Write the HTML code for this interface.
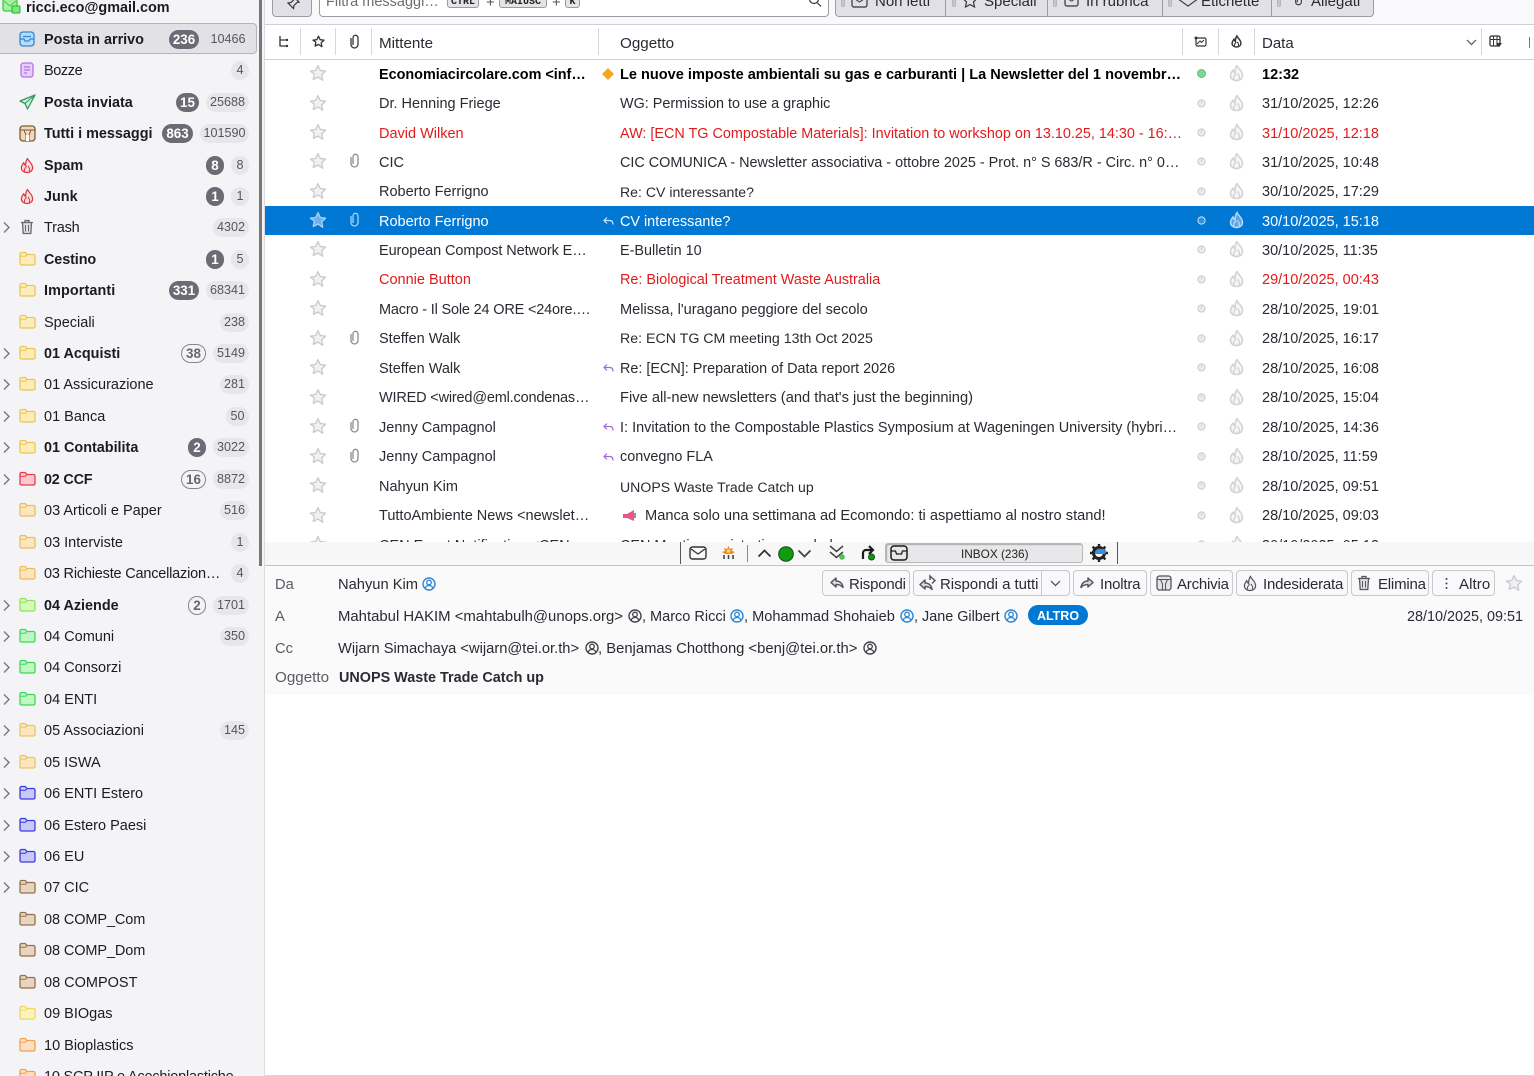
<!DOCTYPE html>
<html lang="it"><head><meta charset="utf-8"><title>Posta in arrivo</title>
<style>
html,body{margin:0;padding:0;width:1534px;height:1076px;overflow:hidden;background:#fff}
body{font:15px "Liberation Sans",sans-serif;color:#1c1b22;position:relative}
div,span,svg{box-sizing:border-box}
.a{position:absolute;white-space:nowrap}
svg{position:absolute;overflow:visible;fill:none}
#side{position:absolute;left:0;top:0;width:265px;height:1076px;background:#f4f4f6;border-right:1px solid #dcdce0;overflow:hidden}
#sb{position:absolute;left:259px;top:0;width:3px;height:566px;background:#777}
.f{position:absolute;left:0;width:258px;height:31px}
.f .n{position:absolute;left:44px;top:8px;line-height:17px;font-size:14.5px;white-space:nowrap}
.f.b .n{font-weight:bold;font-size:14.4px}
.f svg.fo{left:19px;top:7px;width:17px;height:15px}
.f svg.ch{left:3px;top:9px;width:7px;height:13px}
.c{position:absolute;top:6px;height:19px;border-radius:10px;background:#e7e7eb;color:#55555e;font-size:12.6px;line-height:19px;text-align:center;right:9px}
.u{position:absolute;top:6px;height:19px;border-radius:10px;background:#6b6b76;color:#fff;font-weight:bold;font-size:13.4px;line-height:19px;text-align:center}
.o{position:absolute;top:6px;height:19px;border-radius:10px;border:1px solid #85858e;color:#66666e;font-weight:bold;font-size:13.4px;line-height:17px;text-align:center;background:#f4f4f6}
.r{position:absolute;left:265px;width:1269px;height:29.4px;color:#2b2a33}
.r .m,.r .s,.r .d{position:absolute;top:7.500px;line-height:17px;white-space:nowrap;font-size:14.5px}
.r .s{font-size:14.4px}
.r .m{left:114px}.r .s{left:355px}.r .d{left:997px}
.r.b{font-weight:bold;color:#000}
.r.red{color:#e01b1b}
.r.sel{background:#0078d4;color:#fff}
.st{left:44px;top:5px;width:18px;height:18px}
.cl{left:84px;top:6px;width:11px;height:15px}
.dt{left:932px;top:10px;width:9px;height:9px}
.fl{left:964px;top:5px;width:15px;height:18px}
.rp{left:338px;top:10px;width:11px;height:10px}
.h{position:absolute;top:28px;width:1px;height:27px;background:#d8d8dc}
.l{position:absolute;font-size:14.7px;line-height:18px;white-space:nowrap;color:#2b2a33}
.btn{position:absolute;top:570px;height:26px;border:1px solid #c8c8cd;border-radius:4px;background:#f9f9fb;font-size:15px;line-height:26px;color:#2b2a33;white-space:nowrap;letter-spacing:-.2px}
.btn span{position:absolute;top:0}
.tab{position:absolute;top:-8px;height:25px;background:#e0e0e6;border-right:1px solid #9d9da3;border-bottom:1px solid #9d9da3;font-size:15px;line-height:16px;white-space:nowrap;color:#2b2a33}
.key{position:absolute;top:-8px;height:16px;background:#e4e4e8;border:1px solid #9a9aa0;border-radius:3px;font:bold 10px/20px "Liberation Mono",monospace;text-align:center;color:#222;overflow:hidden}
.g{position:absolute;top:-4px;width:4px;height:11px;border-radius:2px;background:#c6c6cc;border:1px solid #b4b4ba}
</style></head><body>
<svg width="0" height="0" style="position:absolute"><defs>
<symbol id="star" viewBox="0 0 18 18"><path d="M9 1.600l2.300 4.900 5.300.7-3.900 3.700 1 5.400L9 13l-4.700 2.400 1-5.400L1.400 7.200l5.300-.7z" fill="#f1f1f3" stroke="#c9c9cf" stroke-width="1.300" stroke-linejoin="round"/></symbol>
<symbol id="stars" viewBox="0 0 18 18"><path d="M9 1.600l2.300 4.900 5.300.7-3.900 3.700 1 5.400L9 13l-4.700 2.400 1-5.400L1.400 7.200l5.300-.7z" fill="#6fb1e8" stroke="#a9d3f3" stroke-width="1.300" stroke-linejoin="round"/></symbol>
<symbol id="clip" viewBox="0 0 11 15"><path d="M2 4.500v6a3.500 3.500 0 0 0 7 0V3.800a2.500 2.500 0 0 0-5 0v6.700" stroke="currentColor" stroke-width="1.300" stroke-linecap="round"/></symbol>
<symbol id="fl" viewBox="0 0 15 17"><path d="M8 1c1 3 5.500 5 5.500 10 0 3-2.500 5-6 5s-6-2-6-5c0-2.500 1.500-4 2.500-5.500C4.500 7 5 8 6 8.500 6 6 6.500 3 8 1z" stroke="#d2d2d6" stroke-width="1.500" fill="#f6f6f8" stroke-linejoin="round"/><path d="M5 15c-1-2.500.5-3.500 2-6M10 15c1-2.500 0-4-1.500-6" stroke="#d2d2d6" stroke-width="1.300"/></symbol>
<symbol id="flr" viewBox="0 0 15 17"><path d="M8 1c1 3 5.500 5 5.500 10 0 3-2.500 5-6 5s-6-2-6-5c0-2.500 1.500-4 2.500-5.500C4.500 7 5 8 6 8.500 6 6 6.500 3 8 1z" stroke="#d83a42" stroke-width="1.300" fill="#fbdcdc" stroke-linejoin="round"/><path d="M5 15c-1-2.500.5-3.500 2-6M10 15c1-2.500 0-4-1.500-6" stroke="#d83a42" stroke-width="1.100"/></symbol>
<symbol id="dot" viewBox="0 0 9 9"><circle cx="4.500" cy="4.500" r="3.600" fill="#ececef" stroke="#c8c8cc"/><path d="M4.500 2.500v2" stroke="#c8c8cc"/></symbol>
<symbol id="rep" viewBox="0 0 11 10"><path d="M4 1.500L1 4.500l3 3M1.500 4.500H7c2 0 3 1.300 3 4" stroke="#a06ad8" stroke-width="1.200"/></symbol>
<symbol id="ch" viewBox="0 0 7 13"><path d="M1 1.500l5 5-5 5" stroke="#77777f" stroke-width="1.400"/></symbol>
<symbol id="fd" viewBox="0 0 17 15"><path d="M1 3a1.500 1.500 0 0 1 1.500-1.500h3.700L8 3.500h6.500A1.500 1.500 0 0 1 16 5v7.500a1.500 1.500 0 0 1-1.500 1.500h-12A1.500 1.500 0 0 1 1 12.500z" stroke="currentColor" stroke-width="1.300" fill="var(--x)"/><path d="M1 5.200h5.500L8 3.500" stroke="currentColor" stroke-width="1"/></symbol>
<symbol id="pr" viewBox="0 0 14 14"><circle cx="7" cy="7" r="6" stroke="currentColor" stroke-width="1.400"/><circle cx="7" cy="5.500" r="2.300" stroke="currentColor" stroke-width="1.300"/><path d="M3 11.500c.7-2.200 2-3 4-3s3.300.8 4 3" stroke="currentColor" stroke-width="1.300"/></symbol>
</defs></svg>

<div id="side">
<div class="a" style="left:26px;top:0;font-weight:bold;font-size:14.4px;line-height:17px">ricci.eco@gmail.com</div>
<svg style="left:2px;top:-2px;width:20px;height:17px" viewBox="0 0 20 17"><rect x="1" y="1" width="14" height="12" rx="2" fill="#a6f0a6" stroke="#3ccf3c" stroke-width="1.300"/><path d="M2 3l6 5 6-5" stroke="#3ccf3c"/><rect x="10" y="8" width="8" height="7" rx="1" fill="#7fe67f" stroke="#24b324"/></svg>

<div class="f b" style="top:23px;height:31px;width:257px;background:#e1e1e6;border:1px solid #b4b4bb;border-left:0;border-radius:0 4px 4px 0"><svg style="left:19px;top:7px;width:16px;height:16px" viewBox="0 0 16 16"><rect x="1" y="1" width="14" height="14" rx="3" fill="#b8dcf8" stroke="#2f86d4" stroke-width="1.300"/><path d="M1 8h4l1 2h4l1-2h4M4 5.500h8" stroke="#2f86d4" stroke-width="1.200"/></svg><span class="n" style="top:8px">Posta in arrivo</span><span class="u" style="left:169px;width:30px;top:6px">236</span><span class="c" style="left:200px;right:auto;width:56px;top:6px;background:none">10466</span></div>

<div class="f" style="top:55px"><svg style="left:20px;top:7px;width:14px;height:16px" viewBox="0 0 14 16"><rect x="1" y="1" width="12" height="14" rx="2.500" fill="#e6cdfb" stroke="#b273ea" stroke-width="1.300"/><path d="M4 5h6M4 8h6M4 11h3" stroke="#a45fe0"/></svg><span class="n" style="letter-spacing:-.4px">Bozze</span><span class="c" style="width:18px">4</span></div>
<div class="f b" style="top:86.500px"><svg style="left:19px;top:7px;width:17px;height:16px" viewBox="0 0 17 16"><path d="M16 1L1 7l5 2.500L8.500 15z" fill="#d2f0dc" stroke="#2f9a5f" stroke-width="1.300" stroke-linejoin="round"/><path d="M16 1L6 9.500" stroke="#2f9a5f"/></svg><span class="n">Posta inviata</span><span class="u" style="left:176px;width:23px">15</span><span class="c" style="width:43px">25688</span></div>
<div class="f b" style="top:118px"><svg style="left:19px;top:7px;width:17px;height:17px" viewBox="0 0 17 17"><rect x="1" y="1" width="15" height="15" rx="3" fill="#f0d8b8" stroke="#7e5a3c" stroke-width="1.300"/><path d="M1 5h15M5 5l2 5v6M12 5l-2 5v6" stroke="#7e5a3c"/><path d="M7 10h3v6H7z" fill="#fff"/></svg><span class="n">Tutti i messaggi</span><span class="u" style="left:162px;width:31px">863</span><span class="c" style="width:49px">101590</span></div>
<div class="f b" style="top:149.500px"><svg style="left:20px;top:7px;width:14px;height:17px"><use href="#flr"/></svg><span class="n">Spam</span><span class="u" style="left:206px;width:18px">8</span><span class="c" style="width:18px">8</span></div>
<div class="f b" style="top:181px"><svg style="left:20px;top:7px;width:14px;height:17px"><use href="#flr"/></svg><span class="n">Junk</span><span class="u" style="left:206px;width:18px">1</span><span class="c" style="width:18px">1</span></div>
<div class="f" style="top:212px"><svg class="ch"><use href="#ch"/></svg><svg style="left:20px;top:7px;width:14px;height:16px" viewBox="0 0 14 16"><path d="M1 3.500h12M5 3.500V1.500h4v2M2.500 3.500l.7 11h7.600l.7-11z" stroke="#66666e" stroke-width="1.300" fill="#e0e0e3"/><path d="M5.500 6v6.500M8.500 6v6.500" stroke="#66666e"/></svg><span class="n" style="letter-spacing:-.2px">Trash</span><span class="c" style="width:36px">4302</span></div>

<div class="f b" style="top:243.500px;--x:#fcedb8"><svg class="fo" style="color:#e8c658"><use href="#fd"/></svg><span class="n" style="letter-spacing:-.1px">Cestino</span><span class="u" style="left:206px;width:18px">1</span><span class="c" style="width:18px">5</span></div>
<div class="f b" style="top:275px;--x:#fcedb8"><svg class="fo" style="color:#e8c658"><use href="#fd"/></svg><span class="n" style="letter-spacing:.1px">Importanti</span><span class="u" style="left:169px;width:30px">331</span><span class="c" style="width:43px">68341</span></div>
<div class="f" style="top:306.500px;--x:#fcedb8"><svg class="fo" style="color:#e8c658"><use href="#fd"/></svg><span class="n">Speciali</span><span class="c" style="width:29px">238</span></div>
<div class="f b" style="top:338px;--x:#fcedb8"><svg class="ch"><use href="#ch"/></svg><svg class="fo" style="color:#e8c658"><use href="#fd"/></svg><span class="n">01 Acquisti</span><span class="o" style="left:181px;width:25px">38</span><span class="c" style="width:36px">5149</span></div>
<div class="f" style="top:369px;--x:#fcedb8"><svg class="ch"><use href="#ch"/></svg><svg class="fo" style="color:#e8c658"><use href="#fd"/></svg><span class="n">01 Assicurazione</span><span class="c" style="width:29px">281</span></div>
<div class="f" style="top:400.500px;--x:#fcedb8"><svg class="ch"><use href="#ch"/></svg><svg class="fo" style="color:#e8c658"><use href="#fd"/></svg><span class="n">01 Banca</span><span class="c" style="width:23px">50</span></div>
<div class="f b" style="top:432px;--x:#fcedb8"><svg class="ch"><use href="#ch"/></svg><svg class="fo" style="color:#e8c658"><use href="#fd"/></svg><span class="n">01 Contabilita</span><span class="u" style="left:188px;width:18px">2</span><span class="c" style="width:36px">3022</span></div>
<div class="f b" style="top:463.500px;--x:#fdc9cf"><svg class="ch"><use href="#ch"/></svg><svg class="fo" style="color:#e33b4a"><use href="#fd"/></svg><span class="n" style="letter-spacing:-.2px">02 CCF</span><span class="o" style="left:181px;width:25px">16</span><span class="c" style="width:36px">8872</span></div>
<div class="f" style="top:495px;--x:#fde5bd"><svg class="fo" style="color:#edbb5f"><use href="#fd"/></svg><span class="n">03 Articoli e Paper</span><span class="c" style="width:29px">516</span></div>
<div class="f" style="top:526.500px;--x:#fde5bd"><svg class="fo" style="color:#edbb5f"><use href="#fd"/></svg><span class="n">03 Interviste</span><span class="c" style="width:18px">1</span></div>
<div class="f" style="top:558px;--x:#fde5bd"><svg class="fo" style="color:#edbb5f"><use href="#fd"/></svg><span class="n" style="letter-spacing:-.2px">03 Richieste Cancellazion…</span><span class="c" style="width:18px">4</span></div>
<div class="f b" style="top:589.500px;--x:#d5f9b8"><svg class="ch"><use href="#ch"/></svg><svg class="fo" style="color:#92e25c"><use href="#fd"/></svg><span class="n">04 Aziende</span><span class="o" style="left:188px;width:18px">2</span><span class="c" style="width:36px">1701</span></div>
<div class="f" style="top:620.500px;--x:#bff6c4"><svg class="ch"><use href="#ch"/></svg><svg class="fo" style="color:#3fd65a"><use href="#fd"/></svg><span class="n">04 Comuni</span><span class="c" style="width:29px">350</span></div>
<div class="f" style="top:652px;--x:#bff6c4"><svg class="ch"><use href="#ch"/></svg><svg class="fo" style="color:#3fd65a"><use href="#fd"/></svg><span class="n">04 Consorzi</span></div>
<div class="f" style="top:683.500px;--x:#bff6c4"><svg class="ch"><use href="#ch"/></svg><svg class="fo" style="color:#3fd65a"><use href="#fd"/></svg><span class="n">04 ENTI</span></div>
<div class="f" style="top:715px;--x:#fde5bd"><svg class="ch"><use href="#ch"/></svg><svg class="fo" style="color:#edc367"><use href="#fd"/></svg><span class="n">05 Associazioni</span><span class="c" style="width:29px">145</span></div>
<div class="f" style="top:746.500px;--x:#fde5bd"><svg class="ch"><use href="#ch"/></svg><svg class="fo" style="color:#edc367"><use href="#fd"/></svg><span class="n">05 ISWA</span></div>
<div class="f" style="top:778px;--x:#c8c8fb"><svg class="ch"><use href="#ch"/></svg><svg class="fo" style="color:#3c3cd8"><use href="#fd"/></svg><span class="n">06 ENTI Estero</span></div>
<div class="f" style="top:809.500px;--x:#c8c8fb"><svg class="ch"><use href="#ch"/></svg><svg class="fo" style="color:#3c3cd8"><use href="#fd"/></svg><span class="n">06 Estero Paesi</span></div>
<div class="f" style="top:841px;--x:#c8c8fb"><svg class="ch"><use href="#ch"/></svg><svg class="fo" style="color:#3c3cd8"><use href="#fd"/></svg><span class="n">06 EU</span></div>
<div class="f" style="top:872px;--x:#e8d5c0"><svg class="ch"><use href="#ch"/></svg><svg class="fo" style="color:#93704e"><use href="#fd"/></svg><span class="n">07 CIC</span></div>
<div class="f" style="top:903.500px;--x:#e8d5c0"><svg class="fo" style="color:#93704e"><use href="#fd"/></svg><span class="n" style="letter-spacing:-.1px">08 COMP_Com</span></div>
<div class="f" style="top:935px;--x:#e8d5c0"><svg class="fo" style="color:#93704e"><use href="#fd"/></svg><span class="n" style="letter-spacing:-.1px">08 COMP_Dom</span></div>
<div class="f" style="top:966.500px;--x:#e8d5c0"><svg class="fo" style="color:#93704e"><use href="#fd"/></svg><span class="n">08 COMPOST</span></div>
<div class="f" style="top:998px;--x:#fdf3bd"><svg class="fo" style="color:#ecd765"><use href="#fd"/></svg><span class="n">09 BIOgas</span></div>
<div class="f" style="top:1029.500px;--x:#fde0c4"><svg class="fo" style="color:#f2a04e"><use href="#fd"/></svg><span class="n">10 Bioplastics</span></div>
<div class="f" style="top:1061px;--x:#fde0c4"><svg class="fo" style="color:#f2a04e"><use href="#fd"/></svg><span class="n" style="letter-spacing:-.2px">10 SCP IIP e Acechioplastiche</span></div>
<div id="sb"></div>
</div>

<!-- top toolbar -->
<div class="a" style="left:265px;top:0;width:1269px;height:25px;background:#f9f9fb;border-bottom:1px solid #cfcfd8;overflow:hidden">
<div class="a" style="left:7px;top:-8px;width:40px;height:25px;background:#e0e0e6;border:1px solid #9d9da3;border-radius:4px"><svg style="left:13px;top:3px;width:14px;height:14px" viewBox="0 0 14 14"><path d="M8 1l5 5-2 .5-3 3-.5 3L2 7l3-.5 3-3z" stroke="#33333a" stroke-width="1.200"/></svg></div>
<div class="a" style="left:54px;top:-8px;width:510px;height:25px;background:#fff;border:1px solid #9d9da3;border-radius:4px"></div>
<div class="a" style="left:61px;top:-6px;font-size:14.5px;line-height:16px;color:#6c6c75">Filtra messaggi…</div>
<div class="key" style="left:182px;width:32px">CTRL</div><div class="a" style="left:221px;top:-6px;color:#55555e">+</div>
<div class="key" style="left:234px;width:48px">MAIUSC</div><div class="a" style="left:287px;top:-6px;color:#55555e">+</div>
<div class="key" style="left:300px;width:15px">K</div>
<svg style="left:543px;top:-5px;width:14px;height:14px" viewBox="0 0 14 14"><circle cx="6" cy="4" r="4.500" stroke="#33333a" stroke-width="1.200"/><path d="M9.500 8l3.500 3.500" stroke="#33333a" stroke-width="1.200"/></svg>
<div class="tab" style="left:570px;width:111px;border-left:1px solid #9d9da3;border-radius:0 0 0 4px"><span class="a" style="left:39px;top:2px">Non letti</span></div>
<div class="tab" style="left:681px;width:102px"><span class="a" style="left:38px;top:2px">Speciali</span></div>
<div class="tab" style="left:783px;width:115px"><span class="a" style="left:38px;top:2px">In rubrica</span></div>
<div class="tab" style="left:898px;width:109px"><span class="a" style="left:38px;top:2px">Etichette</span></div>
<div class="tab" style="left:1007px;width:102px;border-radius:0 0 4px 0"><span class="a" style="left:39px;top:2px">Allegati</span></div>
<div class="g" style="left:576px"></div><div class="g" style="left:687px"></div><div class="g" style="left:788px"></div><div class="g" style="left:903px"></div><div class="g" style="left:1012px"></div>
<svg style="left:586px;top:-6px;width:17px;height:14px" viewBox="0 0 17 14"><rect x="1" y="1" width="15" height="12" rx="2" stroke="#33333a" stroke-width="1.200"/><path d="M1 3l7.500 5L16 3" stroke="#33333a"/></svg>
<svg style="left:698px;top:-6px;width:14px;height:14px" viewBox="0 0 14 14"><path d="M7 0l2 4 5 .5-3.500 3.500 1 5L7 10.500 2.500 13l1-5L0 4.500 5 4z" stroke="#33333a" stroke-width="1.200"/></svg>
<svg style="left:799px;top:-6px;width:15px;height:13px" viewBox="0 0 15 13"><rect x="1" y="1" width="13" height="11" rx="2" stroke="#33333a" stroke-width="1.200"/><circle cx="7.500" cy="5" r="2" stroke="#33333a"/></svg>
<svg style="left:912px;top:-2px;width:22px;height:9px" viewBox="0 0 24 10"><path d="M1 1l11 8L23 1" stroke="#33333a" stroke-width="1.200"/></svg>
<svg style="left:1029px;top:-7px;width:9px;height:13px;color:#33333a"><use href="#clip"/></svg>
</div>

<!-- column header -->
<div class="a" style="left:265px;top:25px;width:1269px;height:35px;background:#fff;border-bottom:1px solid #cfcfd4"></div>
<div class="h" style="left:300px"></div><div class="h" style="left:335px"></div><div class="h" style="left:371px"></div><div class="h" style="left:598px"></div><div class="h" style="left:1182px"></div><div class="h" style="left:1218px"></div><div class="h" style="left:1254px"></div><div class="h" style="left:1481px"></div>
<svg style="left:278px;top:35px;width:11px;height:14px" viewBox="0 0 11 14"><path d="M2 1v10h7M2 5h7" stroke="#33333a" stroke-width="1.300"/><circle cx="9" cy="5" r="1.200" fill="#33333a"/><circle cx="9" cy="11" r="1.200" fill="#33333a"/></svg>
<svg style="left:312px;top:35px;width:13px;height:13px" viewBox="0 0 18 18"><path d="M9 1.600l2.300 4.900 5.300.7-3.900 3.700 1 5.400L9 13l-4.700 2.400 1-5.400L1.400 7.200l5.300-.7z" stroke="#33333a" stroke-width="1.800" stroke-linejoin="round"/></svg>
<svg style="left:349px;top:34px;width:11px;height:15px;color:#33333a"><use href="#clip"/></svg>
<div class="l" style="left:379px;top:35px;font-size:15.200px">Mittente</div><div class="l" style="left:620px;top:35px;font-size:15.200px">Oggetto</div><div class="l" style="left:1262px;top:35px;font-size:15px">Data</div>
<svg style="left:1194px;top:36px;width:13px;height:11px" viewBox="0 0 13 11"><rect x="2" y="2" width="10" height="8" rx="1.500" stroke="#33333a" stroke-width="1.200"/><path d="M3 8l3-3 1.500 1.500L10 4" stroke="#33333a"/><circle cx="2" cy="2" r="1.500" fill="#33333a"/></svg>
<svg style="left:1231px;top:35px;width:11px;height:13px" viewBox="0 0 15 17"><path d="M8 1c1 3 5.500 5 5.500 10 0 3-2.500 5-6 5s-6-2-6-5c0-2.500 1.500-4 2.500-5.500C4.500 7 5 8 6 8.500 6 6 6.500 3 8 1z" stroke="#33333a" stroke-width="2"/><path d="M5 15c-1-2.500.5-3.500 2-6M10 15c1-2.500 0-4-1.500-6" stroke="#33333a" stroke-width="1.500"/></svg>
<svg style="left:1466px;top:39px;width:11px;height:7px" viewBox="0 0 11 7"><path d="M1 1l4.500 4.500L10 1" stroke="#55555e" stroke-width="1.200"/></svg>
<svg style="left:1489px;top:35px;width:13px;height:13px" viewBox="0 0 13 13"><rect x="1" y="1" width="10" height="10" rx="1.500" stroke="#33333a" stroke-width="1.300"/><path d="M1 4.500h10M4.500 1v10M8 1v10" stroke="#33333a"/><path d="M7 8h6l-3 4z" fill="#33333a"/></svg>
<div class="a" style="left:1529px;top:37px;width:1px;height:11px;background:#777"></div>

<!-- list -->
<div class="a" style="left:265px;top:59px;width:1269px;height:483px;overflow:hidden">
<div style="position:absolute;left:-265px;top:-59px;width:1534px;height:600px">
<div class="r b" style="top:59px"><svg class="st"><use href="#star"/></svg><span class="m" style="font-size:14.4px">Economiacircolare.com &lt;inf…</span><svg style="left:337px;top:9px;width:12px;height:12px" viewBox="0 0 12 12"><path d="M6 0l6 6-6 6-6-6z" fill="#f5a623"/></svg><span class="s" style="font-size:14.55px">Le nuove imposte ambientali su gas e carburanti | La Newsletter del 1 novembr…</span><svg class="dt" viewBox="0 0 9 9"><circle cx="4.500" cy="4.500" r="4" fill="#7fd69a" stroke="#5ac07c"/></svg><svg class="fl"><use href="#fl"/></svg><span class="d">12:32</span></div>
<div class="r" style="top:88.500px"><svg class="st"><use href="#star"/></svg><span class="m">Dr. Henning Friege</span><span class="s">WG: Permission to use a graphic</span><svg class="dt"><use href="#dot"/></svg><svg class="fl"><use href="#fl"/></svg><span class="d">31/10/2025, 12:26</span></div>
<div class="r red" style="top:118px"><svg class="st"><use href="#star"/></svg><span class="m">David Wilken</span><span class="s">AW: [ECN TG Compostable Materials]: Invitation to workshop on 13.10.25, 14:30 - 16:…</span><svg class="dt"><use href="#dot"/></svg><svg class="fl"><use href="#fl"/></svg><span class="d">31/10/2025, 12:18</span></div>
<div class="r" style="top:147.300px"><svg class="st"><use href="#star"/></svg><svg class="cl" style="color:#8a8a92"><use href="#clip"/></svg><span class="m">CIC</span><span class="s">CIC COMUNICA - Newsletter associativa - ottobre 2025 - Prot. n° S 683/R - Circ. n° 0…</span><svg class="dt"><use href="#dot"/></svg><svg class="fl"><use href="#fl"/></svg><span class="d">31/10/2025, 10:48</span></div>
<div class="r" style="top:176.800px"><svg class="st"><use href="#star"/></svg><span class="m">Roberto Ferrigno</span><span class="s" style="font-size:14.1px">Re: CV interessante?</span><svg class="dt"><use href="#dot"/></svg><svg class="fl"><use href="#fl"/></svg><span class="d">30/10/2025, 17:29</span></div>
<div class="r sel" style="top:206px"><svg class="st"><use href="#stars"/></svg><svg class="cl" style="color:#a9d3f3"><use href="#clip"/></svg><span class="m">Roberto Ferrigno</span><svg class="rp" viewBox="0 0 11 10"><path d="M4 1.500L1 4.500l3 3M1.500 4.500H7c2 0 3 1.300 3 4" stroke="#cfe6fa" stroke-width="1.200"/></svg><span class="s">CV interessante?</span><svg class="dt" viewBox="0 0 9 9"><circle cx="4.500" cy="4.500" r="3.600" fill="#2f8fdc" stroke="#cfe6fa"/></svg><svg class="fl" viewBox="0 0 15 17"><path d="M8 1c1 3 5.500 5 5.500 10 0 3-2.500 5-6 5s-6-2-6-5c0-2.500 1.500-4 2.500-5.500C4.500 7 5 8 6 8.500 6 6 6.500 3 8 1z" stroke="#bcdcf6" stroke-width="1.400" fill="#5aa7e6"/><path d="M5 15c-1-2.500.5-3.500 2-6M10 15c1-2.500 0-4-1.500-6" stroke="#bcdcf6" stroke-width="1.200"/></svg><span class="d">30/10/2025, 15:18</span></div>
<div class="r" style="top:235.300px"><svg class="st"><use href="#star"/></svg><span class="m" style="letter-spacing:-.1px">European Compost Network E…</span><span class="s">E-Bulletin 10</span><svg class="dt"><use href="#dot"/></svg><svg class="fl"><use href="#fl"/></svg><span class="d">30/10/2025, 11:35</span></div>
<div class="r red" style="top:264.800px"><svg class="st"><use href="#star"/></svg><span class="m">Connie Button</span><span class="s">Re: Biological Treatment Waste Australia</span><svg class="dt"><use href="#dot"/></svg><svg class="fl"><use href="#fl"/></svg><span class="d">29/10/2025, 00:43</span></div>
<div class="r" style="top:294.300px"><svg class="st"><use href="#star"/></svg><span class="m" style="letter-spacing:-.18px">Macro - Il Sole 24 ORE &lt;24ore.…</span><span class="s" style="font-size:14.6px">Melissa, l'uragano peggiore del secolo</span><svg class="dt"><use href="#dot"/></svg><svg class="fl"><use href="#fl"/></svg><span class="d">28/10/2025, 19:01</span></div>
<div class="r" style="top:323.800px"><svg class="st"><use href="#star"/></svg><svg class="cl" style="color:#8a8a92"><use href="#clip"/></svg><span class="m">Steffen Walk</span><span class="s" style="font-size:14.2px">Re: ECN TG CM meeting 13th Oct 2025</span><svg class="dt"><use href="#dot"/></svg><svg class="fl"><use href="#fl"/></svg><span class="d">28/10/2025, 16:17</span></div>
<div class="r" style="top:353.300px"><svg class="st"><use href="#star"/></svg><span class="m">Steffen Walk</span><svg class="rp"><use href="#rep"/></svg><span class="s">Re: [ECN]: Preparation of Data report 2026</span><svg class="dt"><use href="#dot"/></svg><svg class="fl"><use href="#fl"/></svg><span class="d">28/10/2025, 16:08</span></div>
<div class="r" style="top:382.500px"><svg class="st"><use href="#star"/></svg><span class="m" style="letter-spacing:-.18px">WIRED &lt;wired@eml.condenas…</span><span class="s" style="font-size:14.7px">Five all-new newsletters (and that's just the beginning)</span><svg class="dt"><use href="#dot"/></svg><svg class="fl"><use href="#fl"/></svg><span class="d">28/10/2025, 15:04</span></div>
<div class="r" style="top:412px"><svg class="st"><use href="#star"/></svg><svg class="cl" style="color:#8a8a92"><use href="#clip"/></svg><span class="m">Jenny Campagnol</span><svg class="rp"><use href="#rep"/></svg><span class="s" style="font-size:14.5px">I: Invitation to the Compostable Plastics Symposium at Wageningen University (hybri…</span><svg class="dt"><use href="#dot"/></svg><svg class="fl"><use href="#fl"/></svg><span class="d">28/10/2025, 14:36</span></div>
<div class="r" style="top:441.500px"><svg class="st"><use href="#star"/></svg><svg class="cl" style="color:#8a8a92"><use href="#clip"/></svg><span class="m">Jenny Campagnol</span><svg class="rp"><use href="#rep"/></svg><span class="s">convegno FLA</span><svg class="dt"><use href="#dot"/></svg><svg class="fl"><use href="#fl"/></svg><span class="d">28/10/2025, 11:59</span></div>
<div class="r" style="top:471px"><svg class="st"><use href="#star"/></svg><span class="m">Nahyun Kim</span><span class="s" style="font-size:14.1px">UNOPS Waste Trade Catch up</span><svg class="dt"><use href="#dot"/></svg><svg class="fl"><use href="#fl"/></svg><span class="d">28/10/2025, 09:51</span></div>
<div class="r" style="top:500.500px"><svg class="st"><use href="#star"/></svg><span class="m">TuttoAmbiente News &lt;newslet…</span><svg style="left:357px;top:8px;width:16px;height:14px" viewBox="0 0 16 14"><path d="M1 5h4l7-4v11L5 9H1z" fill="#e8568a"/><path d="M13 4v5" stroke="#9a8fb0" stroke-width="2"/></svg><span class="s" style="left:380px;font-size:14.65px">Manca solo una settimana ad Ecomondo: ti aspettiamo al nostro stand!</span><svg class="dt"><use href="#dot"/></svg><svg class="fl"><use href="#fl"/></svg><span class="d">28/10/2025, 09:03</span></div>
<div class="r" style="top:530px"><svg class="st"><use href="#star"/></svg><span class="m">CEN Event Notification &lt;CEN…</span><span class="s">CEN Meeting registration needed</span><svg class="dt"><use href="#dot"/></svg><svg class="fl"><use href="#fl"/></svg><span class="d">30/10/2025, 05:12</span></div>
</div></div>

<!-- split toolbar -->
<div class="a" style="left:265px;top:542px;width:1269px;height:24px;background:#f7f7f8;border-bottom:1px solid #c4c4c8"></div>
<div class="a" style="left:680px;top:542px;width:1px;height:22px;background:#55555a"></div>
<div class="a" style="left:747px;top:545px;width:1px;height:17px;background:#88888e"></div>
<div class="a" style="left:1117px;top:542px;width:1px;height:22px;background:#55555a"></div>
<svg style="left:689px;top:546px;width:18px;height:14px" viewBox="0 0 18 14"><rect x="1" y="1" width="16" height="12" rx="2.500" stroke="#333" stroke-width="1.400"/><path d="M2 3l7 5 7-5" stroke="#333" stroke-width="1.300"/></svg>
<svg style="left:721px;top:546px;width:15px;height:14px" viewBox="0 0 15 14"><path d="M7.500 0l1.500 3 3-1-1 3 3 1-3 2H4L1 6l3-1-1-3 3 1z" fill="#f08a24"/><circle cx="7.500" cy="5" r="1.800" fill="#ffd84a"/><path d="M3 9v4M7.500 9v4M12 9v4" stroke="#444" stroke-width="1.600"/></svg>
<svg style="left:757px;top:548px;width:15px;height:10px" viewBox="0 0 15 10"><path d="M1.500 8.500l6-6 6 6" stroke="#333" stroke-width="1.800"/></svg>
<svg style="left:778px;top:546px;width:16px;height:16px" viewBox="0 0 16 16"><circle cx="8" cy="8" r="7.300" fill="#0f9d0f" stroke="#0b4d0b"/></svg>
<svg style="left:797px;top:549px;width:15px;height:10px" viewBox="0 0 15 10"><path d="M1.500 1.500l6 6 6-6" stroke="#444" stroke-width="1.800"/></svg>
<svg style="left:829px;top:545px;width:17px;height:16px" viewBox="0 0 17 16"><path d="M1 1l6.500 5.500L14 1M1 7l6.500 5.500L14 7" stroke="#444" stroke-width="1.600"/><circle cx="13" cy="12" r="2.800" fill="#4fc34f"/></svg>
<svg style="left:860px;top:545px;width:16px;height:16px" viewBox="0 0 16 16"><path d="M3 14V8a3 3 0 0 1 3-3h6M9 1l4 4-4 4" stroke="#1c1c1c" stroke-width="2.200"/><circle cx="11.500" cy="12" r="3" fill="#0f9d0f" stroke="#0b4d0b"/></svg>
<div class="a" style="left:885px;top:543px;width:198px;height:20px;background:#e7e7ea;border:1px solid #b8b8bc;border-radius:3px;box-shadow:inset 1px 1px 1px #aaa"></div>
<svg style="left:890px;top:545px;width:18px;height:16px" viewBox="0 0 18 16"><rect x="1" y="1" width="16" height="14" rx="3" stroke="#1c1c1c" stroke-width="1.500"/><path d="M1 6h4.500l1 3h5l1-3H17" stroke="#1c1c1c" stroke-width="1.300"/></svg>
<div class="a" style="left:961px;top:547px;font-size:11.800px;line-height:15px;color:#222">INBOX (236)</div>
<svg style="left:1090px;top:544px;width:18px;height:18px" viewBox="0 0 18 18"><circle cx="9" cy="9" r="5.500" stroke="#222" stroke-width="3"/><path d="M9 0v4M9 14v4M0 9h4M14 9h4M2.600 2.600l2.800 2.800M12.600 12.600l2.800 2.800M2.600 15.400l2.800-2.800M12.600 5.400l2.800-2.800" stroke="#222" stroke-width="2.400"/><path d="M5 8c1-3 4-4 6-3 2-1 5 1 5 3 0 1-1 2-2 2H6c-1 0-1-1-1-2z" fill="#3a8fd8"/></svg>

<!-- message header -->
<div class="a" style="left:265px;top:566px;width:1269px;height:129px;background:#fafafb"></div>
<div class="l" style="left:275px;top:576px;color:#5b5b66">Da</div>
<div class="l" style="left:338px;top:576px">Nahyun Kim</div><svg style="left:422px;top:577px;width:14px;height:14px;color:#2f86d4"><use href="#pr"/></svg>
<div class="l" style="left:275px;top:608px;color:#5b5b66">A</div>
<div class="l" style="left:338px;top:608px;font-size:14.9px">Mahtabul HAKIM &lt;mahtabulh@unops.org&gt;</div><svg style="left:628px;top:609px;width:14px;height:14px;color:#44444c"><use href="#pr"/></svg>
<div class="l" style="left:642px;top:608px;font-size:14.5px">, Marco Ricci</div><svg style="left:730px;top:609px;width:14px;height:14px;color:#2f86d4"><use href="#pr"/></svg>
<div class="l" style="left:744px;top:608px;font-size:14.6px">, Mohammad Shohaieb</div><svg style="left:900px;top:609px;width:14px;height:14px;color:#2f86d4"><use href="#pr"/></svg>
<div class="l" style="left:914px;top:608px;font-size:14.4px">, Jane Gilbert</div><svg style="left:1004px;top:609px;width:14px;height:14px;color:#2f86d4"><use href="#pr"/></svg>
<div class="a" style="left:1028px;top:605px;width:60px;height:20px;background:#0078d4;border-radius:10px;color:#fff;font-size:12.500px;font-weight:bold;line-height:22px;text-align:center">ALTRO</div>
<div class="l" style="left:1407px;top:608px;font-size:14.4px">28/10/2025, 09:51</div>
<div class="l" style="left:275px;top:640px;color:#5b5b66">Cc</div>
<div class="l" style="left:338px;top:640px">Wijarn Simachaya &lt;wijarn@tei.or.th&gt;</div><svg style="left:585px;top:641px;width:14px;height:14px;color:#44444c"><use href="#pr"/></svg>
<div class="l" style="left:598px;top:640px;font-size:14.8px">, Benjamas Chotthong &lt;benj@tei.or.th&gt;</div><svg style="left:863px;top:641px;width:14px;height:14px;color:#44444c"><use href="#pr"/></svg>
<div class="l" style="left:275px;top:669px;color:#5b5b66;font-size:15.200px">Oggetto</div>
<div class="l" style="left:339px;top:669px;font-weight:bold;font-size:14.4px">UNOPS Waste Trade Catch up</div>

<!-- buttons -->
<div class="btn" style="left:822px;width:88px"><span style="left:26px;top:.5px">Rispondi</span></div>
<div class="btn" style="left:913px;width:157px"><span style="left:26px;top:.5px;letter-spacing:-.05px">Rispondi a tutti</span><i style="position:absolute;left:127px;top:0;width:1px;height:24px;background:#c8c8cd"></i></div>
<div class="btn" style="left:1073px;width:74px"><span style="left:26px;top:.5px">Inoltra</span></div>
<div class="btn" style="left:1150px;width:83px"><span style="left:26px;top:.5px">Archivia</span></div>
<div class="btn" style="left:1236px;width:112px"><span style="left:26px;top:.5px">Indesiderata</span></div>
<div class="btn" style="left:1351px;width:78px"><span style="left:26px;top:.5px">Elimina</span></div>
<div class="btn" style="left:1432px;width:63px"><span style="left:26px;top:.5px;letter-spacing:.1px">Altro</span></div>
<svg style="left:830px;top:577px;width:14px;height:12px" viewBox="0 0 14 12"><path d="M6 1L1 5.500 6 10V7.500c3 0 5 .5 7 3-.5-4-3-6.500-7-6.500z" fill="#dcdce0" stroke="#55555e" stroke-width="1.500" stroke-linejoin="round"/></svg>
<svg style="left:919px;top:575px;width:18px;height:16px" viewBox="0 0 18 16"><path d="M6 5L1 9.500 6 14V11.500c3 0 5 .5 7 3-.5-4-3-6.500-7-6.500z" fill="#dcdce0" stroke="#55555e" stroke-width="1.500" stroke-linejoin="round"/><path d="M11 5V1l5 4.500-3 3" stroke="#55555e" stroke-width="1.500"/></svg>
<svg style="left:1080px;top:577px;width:14px;height:12px" viewBox="0 0 14 12"><path d="M8 1l5 4.500L8 10V7.500c-3 0-5 .5-7 3 .5-4 3-6.500 7-6.500z" fill="#dcdce0" stroke="#55555e" stroke-width="1.500" stroke-linejoin="round"/></svg>
<svg style="left:1156px;top:575px;width:16px;height:16px" viewBox="0 0 16 16"><rect x="1" y="1" width="14" height="14" rx="2.500" fill="#e4e4e8" stroke="#55555e" stroke-width="1.300"/><path d="M1 4.500h14M4.500 4.500l2 4.500v6M11.500 4.500l-2 4.500v6" stroke="#55555e"/></svg>
<svg style="left:1243px;top:575px;width:14px;height:17px" viewBox="0 0 15 17"><path d="M8 1c1 3 5.500 5 5.500 10 0 3-2.500 5-6 5s-6-2-6-5c0-2.500 1.500-4 2.500-5.500C4.500 7 5 8 6 8.500 6 6 6.500 3 8 1z" stroke="#55555e" stroke-width="1.300" fill="#f0f0f2"/><path d="M5 15c-1-2.500.5-3.500 2-6M10 15c1-2.500 0-4-1.500-6" stroke="#55555e" stroke-width="1.100"/></svg>
<svg style="left:1357px;top:575px;width:14px;height:16px" viewBox="0 0 14 16"><path d="M1 3.500h12M5 3.500V1.500h4v2M2.500 3.500l.7 11h7.600l.7-11z" fill="#e4e4e8" stroke="#55555e" stroke-width="1.300"/><path d="M5.500 6v6.500M8.500 6v6.500" stroke="#55555e"/></svg>
<svg style="left:1445px;top:577px;width:3px;height:13px" viewBox="0 0 3 13"><circle cx="1.500" cy="2" r="1" fill="#444"/><circle cx="1.500" cy="6.500" r="1" fill="#444"/><circle cx="1.500" cy="11" r="1" fill="#444"/></svg>
<svg style="left:1050px;top:580px;width:11px;height:7px" viewBox="0 0 11 7"><path d="M1 1l4.500 4.500L10 1" stroke="#44444c" stroke-width="1.200"/></svg>
<svg style="left:1505px;top:574px;width:18px;height:18px"><use href="#star"/></svg>
<div class="a" style="left:265px;top:1075px;width:1269px;height:1px;background:#d8d8dc"></div>
</body></html>
